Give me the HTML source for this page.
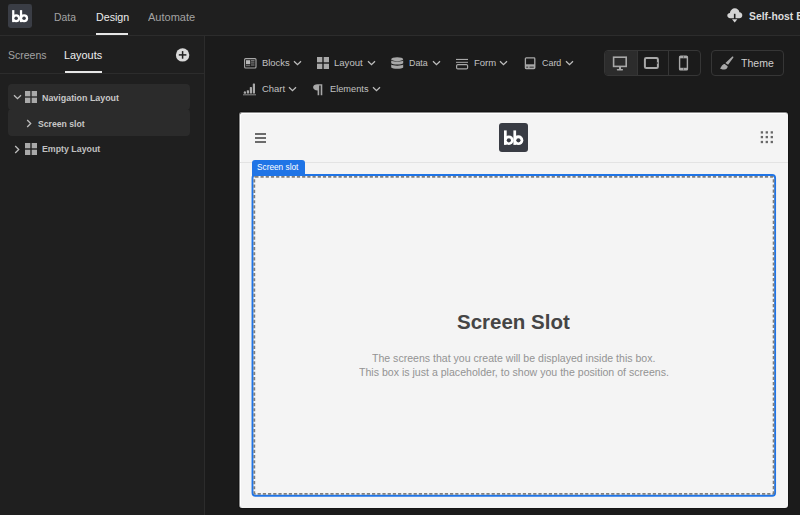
<!DOCTYPE html>
<html><head><meta charset="utf-8"><style>
*{margin:0;padding:0;box-sizing:border-box}
html,body{width:800px;height:515px;overflow:hidden;background:#1b1b1b;font-family:"Liberation Sans",sans-serif}
.a{position:absolute;display:block}
.t{position:absolute;white-space:nowrap;line-height:1;transform-origin:0 0;font-family:"Liberation Sans",sans-serif}
</style></head><body>
<!-- top bar -->
<div class="a" style="left:0;top:0;width:800px;height:35px;background:#1f1f1f"></div>
<div class="a" style="left:0;top:35px;width:800px;height:1px;background:#2c2c2c"></div>
<svg class="a" style="left:8px;top:4px" width="24" height="24" viewBox="0 0 29 29"><rect width="29" height="29" rx="3" fill="#3a3d45"/>
<rect x="5" y="7.4" width="2.7" height="14.5" fill="#fff"/><circle cx="9.85" cy="17.2" r="4.75" fill="#fff"/>
<rect x="14.4" y="7.4" width="2.7" height="14.5" fill="#fff"/><circle cx="19.4" cy="17.2" r="4.9" fill="#fff"/>
<circle cx="9.85" cy="17.3" r="2.1" fill="#3a3d45"/><circle cx="19.4" cy="17.3" r="2.1" fill="#3a3d45"/></svg>
<div class="a" style="left:96px;top:33px;width:32px;height:2px;background:#e6e6e6"></div>
<svg class="a" style="left:727px;top:8px" width="16" height="15" viewBox="0 0 16 15">
<path d="M3.3 10.2 C1.4 10.2 0.3 9 0.3 7.6 C0.3 6.1 1.5 5 2.9 5 C3.3 2.4 5.3 0.3 7.8 0.3 C10.2 0.3 12 2 12.4 4.2 C14.2 4.3 15.3 5.6 15.3 7.2 C15.3 8.9 14 10.2 12.3 10.2 Z" fill="#d4d4d4"/>
<rect x="6.9" y="5.8" width="1.6" height="6" fill="#1f1f1f"/>
<path d="M5 11.2 L10.4 11.2 L7.7 14.4 Z" fill="#d4d4d4"/>
</svg>
<!-- left panel -->
<div class="a" style="left:0;top:36px;width:204px;height:479px;background:#1f1f1f"></div>
<div class="a" style="left:204px;top:36px;width:1px;height:479px;background:#2c2c2c"></div>
<div class="a" style="left:0;top:73px;width:204px;height:1px;background:#2c2c2c"></div>
<div class="a" style="left:65px;top:71px;width:37px;height:2px;background:#e6e6e6"></div>
<svg class="a" style="left:175px;top:48px" width="15" height="14" viewBox="0 0 15 14"><circle cx="7.6" cy="6.9" r="6.7" fill="#d9d9d9"/><rect x="3.8" y="6.15" width="7.6" height="1.5" fill="#1f1f1f"/><rect x="6.85" y="3.1" width="1.5" height="7.6" fill="#1f1f1f"/></svg>
<div class="a" style="left:8px;top:84px;width:182px;height:26px;background:#2b2b2b;border-radius:4px"></div>
<div class="a" style="left:8px;top:109px;width:182px;height:26.5px;background:#2b2b2b;border-radius:4px"></div>
<svg class="a" style="left:13px;top:94px" width="9" height="6" viewBox="0 0 9 6"><path d="M1 1.2 L4.5 4.7 L8 1.2" fill="none" stroke="#bdbdbd" stroke-width="1.3"/></svg>
<svg class="a" style="left:25px;top:91px" width="12" height="12" viewBox="0 0 12 12"><rect x="0" y="0" width="5.3" height="5.3" fill="#a9a9a9"/><rect x="6.7" y="0" width="5.3" height="5.3" fill="#a9a9a9"/><rect x="0" y="6.7" width="5.3" height="5.3" fill="#a9a9a9"/><rect x="6.7" y="6.7" width="5.3" height="5.3" fill="#a9a9a9"/></svg>
<svg class="a" style="left:26px;top:118.5px" width="6" height="9" viewBox="0 0 6 9"><path d="M1.2 1 L4.7 4.5 L1.2 8" fill="none" stroke="#bdbdbd" stroke-width="1.3"/></svg>
<svg class="a" style="left:14px;top:144.5px" width="6" height="9" viewBox="0 0 6 9"><path d="M1.2 1 L4.7 4.5 L1.2 8" fill="none" stroke="#bdbdbd" stroke-width="1.3"/></svg>
<svg class="a" style="left:25px;top:143px" width="12" height="12" viewBox="0 0 12 12"><rect x="0" y="0" width="5.3" height="5.3" fill="#a9a9a9"/><rect x="6.7" y="0" width="5.3" height="5.3" fill="#a9a9a9"/><rect x="0" y="6.7" width="5.3" height="5.3" fill="#a9a9a9"/><rect x="6.7" y="6.7" width="5.3" height="5.3" fill="#a9a9a9"/></svg>
<!-- toolbar -->
<svg class="a" style="left:244px;top:58px" width="13" height="11" viewBox="0 0 13 11"><rect x="0.6" y="0.6" width="11.4" height="9.4" rx="1" fill="none" stroke="#a8a8a8" stroke-width="1.1"/><rect x="2" y="2.2" width="4.2" height="4" fill="#b8b8b8"/><rect x="2" y="7" width="4.2" height="1.2" fill="#6a6a6a"/><rect x="7" y="2.2" width="3.5" height="1.2" fill="#8a8a8a"/><rect x="7" y="4.3" width="3.5" height="1.2" fill="#7a7a7a"/><rect x="7" y="6.4" width="3.5" height="1.2" fill="#7a7a7a"/></svg>
<svg class="a" style="left:293px;top:59.6px" width="9" height="6" viewBox="0 0 9 6"><path d="M1 1.2 L4.5 4.7 L8 1.2" fill="none" stroke="#bdbdbd" stroke-width="1.3"/></svg>
<svg class="a" style="left:317px;top:57px" width="12" height="12" viewBox="0 0 12 12"><rect x="0" y="0" width="5.3" height="5.3" fill="#a9a9a9"/><rect x="6.7" y="0" width="5.3" height="5.3" fill="#a9a9a9"/><rect x="0" y="6.7" width="5.3" height="5.3" fill="#a9a9a9"/><rect x="6.7" y="6.7" width="5.3" height="5.3" fill="#a9a9a9"/></svg>
<svg class="a" style="left:367px;top:59.6px" width="9" height="6" viewBox="0 0 9 6"><path d="M1 1.2 L4.5 4.7 L8 1.2" fill="none" stroke="#bdbdbd" stroke-width="1.3"/></svg>
<svg class="a" style="left:391px;top:57px" width="13" height="13" viewBox="0 0 13 13"><ellipse cx="6.2" cy="2.2" rx="6" ry="2" fill="#a8a8a8"/><path d="M0.2 3.4 C1.5 4.9 11 4.9 12.2 3.4 L12.2 6.2 C11 7.9 1.5 7.9 0.2 6.2 Z" fill="#a8a8a8"/><path d="M0.2 7.6 C1.5 9.1 11 9.1 12.2 7.6 L12.2 10.4 C11 12.2 1.5 12.2 0.2 10.4 Z" fill="#a8a8a8"/></svg>
<svg class="a" style="left:432px;top:59.6px" width="9" height="6" viewBox="0 0 9 6"><path d="M1 1.2 L4.5 4.7 L8 1.2" fill="none" stroke="#bdbdbd" stroke-width="1.3"/></svg>
<svg class="a" style="left:456px;top:58px" width="13" height="12" viewBox="0 0 13 12"><rect x="0" y="0.9" width="12" height="1.1" fill="#a8a8a8"/><rect x="0" y="3.8" width="12" height="1.1" fill="#9a9a9a"/><rect x="0.6" y="6.6" width="11" height="4.3" rx="1.2" fill="none" stroke="#a8a8a8" stroke-width="1.2"/></svg>
<svg class="a" style="left:499.4px;top:59.6px" width="9" height="6" viewBox="0 0 9 6"><path d="M1 1.2 L4.5 4.7 L8 1.2" fill="none" stroke="#bdbdbd" stroke-width="1.3"/></svg>
<svg class="a" style="left:524px;top:57px" width="12" height="13" viewBox="0 0 12 13"><rect x="1.4" y="0.95" width="9.4" height="10.6" rx="0.8" fill="none" stroke="#a8a8a8" stroke-width="1.3"/><rect x="1" y="7.3" width="10" height="4.5" fill="#a8a8a8"/><rect x="2.2" y="9.6" width="2" height="1.1" fill="#333"/><rect x="5.5" y="9.6" width="4.3" height="1.1" fill="#333"/></svg>
<svg class="a" style="left:565px;top:59.6px" width="9" height="6" viewBox="0 0 9 6"><path d="M1 1.2 L4.5 4.7 L8 1.2" fill="none" stroke="#bdbdbd" stroke-width="1.3"/></svg>
<svg class="a" style="left:243px;top:83px" width="14" height="13" viewBox="0 0 14 13"><circle cx="1.9" cy="9.3" r="1.1" fill="#a8a8a8"/><rect x="0.8" y="9" width="2.2" height="1.6" fill="#a8a8a8"/><rect x="3.8" y="7.2" width="2.2" height="3.4" rx="0.6" fill="#a8a8a8"/><rect x="6.8" y="4.1" width="2.2" height="6.5" rx="0.6" fill="#a8a8a8"/><rect x="9.8" y="0.4" width="2.2" height="10.2" rx="0.6" fill="#a8a8a8"/><rect x="0" y="11.3" width="13" height="1" fill="#8a8a8a"/></svg>
<svg class="a" style="left:287.8px;top:85.6px" width="9" height="6" viewBox="0 0 9 6"><path d="M1 1.2 L4.5 4.7 L8 1.2" fill="none" stroke="#bdbdbd" stroke-width="1.3"/></svg>
<svg class="a" style="left:313px;top:84px" width="10" height="12" viewBox="0 0 10 12"><path d="M4.5 0.2 L9.3 0.2 L9.3 11.2 L7.7 11.2 L7.7 1.6 L6.2 1.6 L6.2 11.2 L4.6 11.2 L4.6 6.4 C2 6.4 0.1 5.2 0.1 3.3 C0.1 1.4 2 0.2 4.5 0.2 Z" fill="#a8a8a8"/></svg>
<svg class="a" style="left:371.8px;top:85.6px" width="9" height="6" viewBox="0 0 9 6"><path d="M1 1.2 L4.5 4.7 L8 1.2" fill="none" stroke="#bdbdbd" stroke-width="1.3"/></svg>
<!-- device group -->
<div class="a" style="left:604px;top:50px;width:97px;height:26px;border:1px solid #363636;border-radius:4px"></div>
<div class="a" style="left:605px;top:51px;width:32px;height:24px;background:#2c2c2c;border-radius:3px 0 0 3px"></div>
<div class="a" style="left:637px;top:51px;width:1px;height:24px;background:#363636"></div>
<div class="a" style="left:668px;top:51px;width:1px;height:24px;background:#363636"></div>
<svg class="a" style="left:612px;top:56px" width="16" height="15" viewBox="0 0 16 15"><rect x="1.6" y="1.2" width="12.6" height="9.2" fill="none" stroke="#a8a8a8" stroke-width="1.6"/><rect x="7" y="10.8" width="2" height="2.4" fill="#a8a8a8"/><rect x="4.8" y="13" width="6.2" height="1.4" rx="0.6" fill="#a8a8a8"/></svg>
<svg class="a" style="left:643px;top:56px" width="17" height="14" viewBox="0 0 17 14"><rect x="1.9" y="2.1" width="13" height="10" rx="1.4" fill="none" stroke="#a8a8a8" stroke-width="2"/><rect x="14.1" y="6.4" width="1" height="1.2" fill="#222"/></svg>
<svg class="a" style="left:678px;top:55px" width="11" height="16" viewBox="0 0 11 16"><rect x="1.6" y="1.3" width="7.8" height="13.6" rx="1" fill="none" stroke="#a8a8a8" stroke-width="1.4"/><rect x="1.5" y="1" width="8" height="2.3" fill="#a8a8a8"/><rect x="1.5" y="12.8" width="8" height="2.3" fill="#a8a8a8"/><rect x="5.3" y="1" width="0.5" height="2.3" fill="#444"/><rect x="5.3" y="12.8" width="0.5" height="2.3" fill="#444"/></svg>
<div class="a" style="left:711px;top:50px;width:73px;height:26px;border:1px solid #363636;border-radius:4px"></div>
<svg class="a" style="left:717px;top:53px" width="20" height="20" viewBox="0 0 20 20"><path d="M14.8 3.9 C15.3 3.1 16.6 3.4 16.4 4.5 L11.1 11.8 L8.4 10.1 Z" fill="#a8a8a8"/><path d="M7.7 11.0 L10.7 13.2 C10.6 15 9.6 16.4 7.3 16.6 C5.6 16.7 4.2 16.1 2.9 15.6 C3.8 15 4.0 13.8 5 12.6 C5.7 11.6 6.7 11.0 7.7 11.0 Z" fill="#a8a8a8"/></svg>
<!-- preview frame -->
<div class="a" style="left:238px;top:111px;width:551px;height:398px;border-radius:4px;background:#141414"></div>
<div class="a" style="left:239px;top:112px;width:549px;height:396px;background:#f4f4f4;border-radius:3px;border-left:1px solid #8a8a8a;border-top:1px solid #8a8a8a;box-shadow:inset 1px 1px 0 #ffffff"></div>
<div class="a" style="left:240px;top:162px;width:548px;height:1px;background:#e3e3e3"></div>
<div class="a" style="left:255px;top:133px;width:11px;height:1.5px;background:#6b6b6b"></div>
<div class="a" style="left:255px;top:137px;width:11px;height:1.5px;background:#6b6b6b"></div>
<div class="a" style="left:255px;top:141px;width:11px;height:1.5px;background:#6b6b6b"></div>
<svg class="a" style="left:499px;top:123px" width="29" height="29" viewBox="0 0 29 29"><rect width="29" height="29" rx="3" fill="#393c44"/>
<rect x="5" y="7.4" width="2.7" height="14.5" fill="#fff"/><circle cx="9.85" cy="17.2" r="4.75" fill="#fff"/>
<rect x="14.4" y="7.4" width="2.7" height="14.5" fill="#fff"/><circle cx="19.4" cy="17.2" r="4.9" fill="#fff"/>
<circle cx="9.85" cy="17.3" r="2.1" fill="#393c44"/><circle cx="19.4" cy="17.3" r="2.1" fill="#393c44"/></svg>
<svg class="a" style="left:0;top:0" width="800" height="515" fill="#676767"><rect x="760.75" y="131.25" width="2.3" height="2.3"/><rect x="765.65" y="131.25" width="2.3" height="2.3"/><rect x="770.65" y="131.25" width="2.3" height="2.3"/><rect x="760.75" y="135.95" width="2.3" height="2.3"/><rect x="765.65" y="135.95" width="2.3" height="2.3"/><rect x="770.65" y="135.95" width="2.3" height="2.3"/><rect x="760.75" y="140.85" width="2.3" height="2.3"/><rect x="765.65" y="140.85" width="2.3" height="2.3"/><rect x="770.65" y="140.85" width="2.3" height="2.3"/></svg>
<div class="a" style="left:252px;top:159.5px;width:53px;height:16.5px;background:#1f74e6;border-radius:3px 3px 0 0"></div>
<svg class="a" style="left:0;top:0" width="800" height="515">
<rect x="252.5" y="175" width="522.6" height="320.7" rx="3" fill="none" stroke="#1f74e6" stroke-width="1.9"/>
<rect x="254.3" y="176.9" width="519.3" height="316.9" rx="1" fill="none" stroke="#7e7e7e" stroke-width="1.8" stroke-dasharray="3.2 2"/>
</svg>
<div class="t" style="left:54.39px;top:12.00px;font-size:11.39px;font-weight:normal;color:#a3a3a3;transform:scaleX(0.9130)">Data</div>
<div class="t" style="left:95.56px;top:12.00px;font-size:11.39px;font-weight:normal;color:#ececec;transform:scaleX(0.9382)">Design</div>
<div class="t" style="left:148.00px;top:12.00px;font-size:11.39px;font-weight:normal;color:#a3a3a3;transform:scaleX(0.9688)">Automate</div>
<div class="t" style="left:749.00px;top:10.50px;font-size:11.25px;font-weight:bold;color:#dcdcdc;transform:scaleX(0.9200)">Self-host Budibase</div>
<div class="t" style="left:7.53px;top:50.20px;font-size:10.83px;font-weight:normal;color:#a3a3a3;transform:scaleX(0.9711)">Screens</div>
<div class="t" style="left:64.19px;top:50.20px;font-size:10.83px;font-weight:normal;color:#f0f0f0;transform:scaleX(1.0054)">Layouts</div>
<div class="t" style="left:41.57px;top:93.00px;font-size:9.56px;font-weight:bold;color:#c8c8c8;transform:scaleX(0.9305)">Navigation Layout</div>
<div class="t" style="left:38.00px;top:119.80px;font-size:8.72px;font-weight:bold;color:#c8c8c8;transform:scaleX(0.9930)">Screen slot</div>
<div class="t" style="left:41.81px;top:145.15px;font-size:9.35px;font-weight:bold;color:#c0c0c0;transform:scaleX(0.9426)">Empty Layout</div>
<div class="t" style="left:261.54px;top:58.00px;font-size:9.84px;font-weight:normal;color:#c2c2c2;transform:scaleX(0.9566)">Blocks</div>
<div class="t" style="left:334.28px;top:58.00px;font-size:9.84px;font-weight:normal;color:#c2c2c2;transform:scaleX(0.9718)">Layout</div>
<div class="t" style="left:408.85px;top:58.00px;font-size:9.84px;font-weight:normal;color:#c2c2c2;transform:scaleX(0.9000)">Data</div>
<div class="t" style="left:473.78px;top:58.00px;font-size:9.84px;font-weight:normal;color:#c2c2c2;transform:scaleX(0.9682)">Form</div>
<div class="t" style="left:541.63px;top:58.00px;font-size:9.84px;font-weight:normal;color:#c2c2c2;transform:scaleX(0.9069)">Card</div>
<div class="t" style="left:262.00px;top:84.00px;font-size:9.84px;font-weight:normal;color:#c2c2c2;transform:scaleX(0.9583)">Chart</div>
<div class="t" style="left:330.06px;top:84.00px;font-size:9.84px;font-weight:normal;color:#c2c2c2;transform:scaleX(0.9400)">Elements</div>
<div class="t" style="left:741.20px;top:57.00px;font-size:11.6px;font-weight:normal;color:#cfcfcf;transform:scaleX(0.9073)">Theme</div>
<div class="t" style="left:257.29px;top:162.90px;font-size:8.65px;font-weight:normal;color:#ffffff;transform:scaleX(0.9594)">Screen slot</div>
<div class="t" style="left:456.81px;top:311.50px;font-size:20.69px;font-weight:bold;color:#454545;transform:scaleX(0.9912)">Screen Slot</div>
<div class="t" style="left:371.63px;top:352.50px;font-size:11.56px;font-weight:normal;color:#939393;transform:scaleX(0.9142)">The screens that you create will be displayed inside this box.</div>
<div class="t" style="left:359.40px;top:367.00px;font-size:11.56px;font-weight:normal;color:#939393;transform:scaleX(0.9163)">This box is just a placeholder, to show you the position of screens.</div>
</body></html>
